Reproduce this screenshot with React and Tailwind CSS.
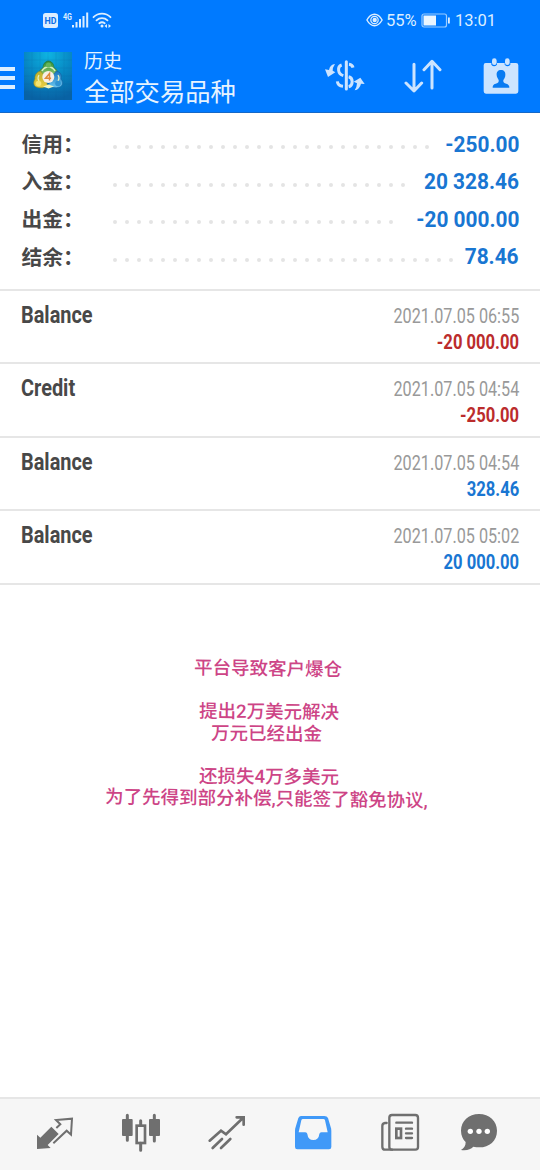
// App.jsx

import React from 'react';

const summary = [
  { label: '信用：', dots: 27, value: '-250.00' },
  { label: '入金：', dots: 25, value: '20 328.46' },
  { label: '出金：', dots: 24, value: '-20 000.00' },
  { label: '结余：', dots: 29, value: '78.46' },
];

const operations = [
  { type: 'Balance', date: '2021.07.05 06:55', amount: '-20 000.00' },
  { type: 'Credit', date: '2021.07.05 04:54', amount: '-250.00' },
  { type: 'Balance', date: '2021.07.05 04:54', amount: '328.46' },
  { type: 'Balance', date: '2021.07.05 05:02', amount: '20 000.00' },
];

const StatusBar = () => (
  <div className="flex h-10 items-center justify-between pl-[43px] pr-11">
    <div className="flex items-center">
      <svg width="70" height="20" viewBox="0 0 70 20" fill="none">
        <rect x="0" y="3" width="15" height="15" rx="2.5" fill="#dceeff" />
        <text x="7.5" y="14" textAnchor="middle" fontFamily="Roboto, sans-serif" fontSize="9.5" fontWeight="700" fill="#0a6ee8" textLength="12" lengthAdjust="spacingAndGlyphs">HD</text>
        <text x="20" y="9.5" fontFamily="Roboto, sans-serif" fontSize="9" fontWeight="700" fill="#dceeff" textLength="9" lengthAdjust="spacingAndGlyphs">4G</text>
        <path d="M30 15v2.5M33.5 12v5.5M37 9v8.5M40.5 6v11.5M44.2 2.5v15" stroke="#dceeff" strokeWidth="2" />
        <path d="M50.5 7.2a12 12 0 0 1 17 0M53.5 10.3a8 8 0 0 1 11 0M56.3 13.3a4.5 4.5 0 0 1 5.4 0" stroke="#dceeff" strokeWidth="1.8" strokeLinecap="round" />
        <circle cx="59" cy="16" r="1.5" fill="#dceeff" />
        <path d="M61.5 16l2.500-2v4zM68 16l-2.500-2v4z" fill="#dceeff" />
      </svg>
    </div>
    <div className="flex items-center text-[#dceeff]">
      <svg width="17" height="14" viewBox="0 0 17 14" fill="none" className="mr-[3px]">
        <path d="M.9 7C3 3.2 5.5 1.3 8.5 1.3S14 3.2 16.1 7C14 10.8 11.5 12.7 8.5 12.7S3 10.8.9 7z" stroke="#dceeff" strokeWidth="1.4" />
        <circle cx="8.5" cy="7" r="3.7" stroke="#dceeff" strokeWidth="1.2" />
        <circle cx="8.7" cy="7" r="2.2" fill="#dceeff" />
      </svg>
      <span className="mt-0.5 w-[35px] whitespace-nowrap text-[16.5px]">55%</span>
      <svg width="30" height="15" viewBox="0 0 30 15" fill="none" className="mr-1">
        <rect x="1" y="1" width="24.5" height="13" rx="2" stroke="#9accff" strokeWidth="1.2" />
        <rect x="2.5" y="2.5" width="12.5" height="10" fill="#eaf5ff" />
        <rect x="27" y="4.5" width="1.8" height="6" fill="#dceeff" />
      </svg>
      <span className="mt-0.5 w-[41px] whitespace-nowrap text-[16.5px]">13:01</span>
    </div>
  </div>
);

const AppLogo = () => (
  <svg width="48" height="48" viewBox="0 0 48 48">
    <defs>
      <radialGradient id="logoBg" cx="50%" cy="5%" r="95%">
        <stop offset="0" stopColor="#0eb4e2" />
        <stop offset="0.5" stopColor="#0789c4" />
        <stop offset="1" stopColor="#0862a4" />
      </radialGradient>
      <linearGradient id="green" x1="0" y1="0" x2="0" y2="1">
        <stop offset="0" stopColor="#2f8c35" />
        <stop offset="1" stopColor="#a3d67c" />
      </linearGradient>
      <linearGradient id="gold" x1="0" y1="0" x2="0" y2="1">
        <stop offset="0" stopColor="#b9b02d" />
        <stop offset="1" stopColor="#eccf45" />
      </linearGradient>
      <linearGradient id="sky" x1="0" y1="0" x2="0" y2="1">
        <stop offset="0" stopColor="#1873bd" />
        <stop offset="1" stopColor="#6ac6ef" />
      </linearGradient>
    </defs>
    <rect width="48" height="48" fill="url(#logoBg)" />
    <path d="M8 0v48M16 0v48M24 0v48M32 0v48M40 0v48M0 8h48M0 16h48M0 24h48M0 32h48M0 40h48" stroke="#0a5e9a" strokeWidth=".4" opacity=".35" />
    <path d="M16 23c-1-3 0-6 3-7 0-4 2.5-7 5.5-7s5.500 3 5.500 7c3 1 4 4 3 7l-3 4H19z" fill="url(#green)" stroke="#23702f" strokeWidth=".6" />
    <path d="M16.5 19c-4 1-6 4-5.5 8-2 3-1.500 7 1.500 8 4 1.500 8 1 11-1.500L21 24z" fill="url(#gold)" stroke="#8a8a25" strokeWidth=".6" />
    <path d="M32.5 19c4 1 5.500 4 4.500 8 2.500 3 2 7-1.500 8-4 1.500-8 .5-11-2L28 24z" fill="url(#sky)" stroke="#155f9f" strokeWidth=".6" />
    <path d="M18 19q2-4 6.500-4t6.500 4" stroke="#d5efbd" strokeWidth="1.6" fill="none" />
    <path d="M15 23q-2 3 0 6M34 23q2 3 0 6" stroke="#e6efc0" strokeWidth="1.2" fill="none" />
    <circle cx="24.5" cy="13" r="2.6" fill="#63b55a" />
    <circle cx="14.5" cy="31.5" r="2.8" fill="#f6e470" />
    <circle cx="34" cy="31.5" r="2.8" fill="#3093d2" />
    <path d="M19 34.500l5.500-2 5.500 2-5.500 2z" fill="#eef4c0" />
    <circle cx="24.3" cy="25" r="6" fill="#f7efe6" />
    <path d="M25.5 28.500v-7l-4 4.800h5.600" stroke="#e08a3c" strokeWidth="1.500" fill="none" />
  </svg>
);

const CurrencyIcon = () => (
  <svg width="42" height="34" viewBox="162 177 126 102" fill="none" stroke="#cce4ff">
    <path d="M229 185v82" strokeWidth="9" strokeLinecap="round" />
    <path d="M215 195c-14 5-12 27 5 32M237 193c8 1 11 5 12 10M236 230c14 3 14 27 0 30M219 259c-10-1-16-6-17-15" strokeWidth="9" />
    <path d="M195 192q-15 2-18 18l-12-2 9 23 22-14-8-5q-1-8 7-20z" fill="#cce4ff" stroke="none" />
    <path d="M254 271q15-3 19-20l11 1-13-19-20 12 10 5q0 10-7 21z" fill="#cce4ff" stroke="none" />
  </svg>
);

const SortIcon = () => (
  <svg width="38" height="34" viewBox="402 177 114 102" fill="none" stroke="#cce4ff" strokeWidth="9" strokeLinecap="round" strokeLinejoin="round">
    <path d="M432 193v79M408 249l24 24 23-24M486 264v-79M462 209l24-25 24 25" />
  </svg>
);

const CalendarIcon = () => (
  <svg width="36" height="38" viewBox="639 171 108 114">
    <path d="M647 189h17v5q8 10 17 0v-5h23v5q9 10 17 0v-5h17q7 0 7 7v78q0 7-7 7h-90q-7 0-7-7v-78q0-7 6-7z" fill="#cce4ff" />
    <rect x="666" y="175" width="14" height="20" rx="7" fill="#cce4ff" />
    <rect x="705" y="175" width="14" height="20" rx="7" fill="#cce4ff" />
    <path d="M693 210c-9 0-14 6-13 15 0 7 4 11 6 15 1 8-3 9-9 11-7 2-9 5-9 12h50c0-7-3-10-9-12-7-2-10-3-9-11 3-4 6-8 6-15 1-9-4-15-13-15z" fill="#087bf2" />
  </svg>
);

const Header = () => (
  <header className="h-[112.5px] border-b border-[#1468c8] bg-[#007aff]">
    <StatusBar />
    <div className="flex h-[71px] items-start">
      <div className="mt-[27px] flex w-[15px] flex-col gap-[5px]">
        <span className="h-1 bg-[#dceeff]" />
        <span className="h-1 bg-[#dceeff]" />
        <span className="h-1 bg-[#dceeff]" />
      </div>
      <div className="ml-[9px] mt-3">
        <AppLogo />
      </div>
      <div className="ml-3 mt-1.5 flex-1 whitespace-nowrap font-['Noto_Sans_CJK_SC',sans-serif] text-[#e6f3ff]">
        <div className="text-[19px] leading-[27px]">历史</div>
        <div className="text-[25.3px] leading-[34px]">全部交易品种</div>
      </div>
      <div className="mr-[21px] mt-[17px] flex items-center">
        <CurrencyIcon />
        <span className="ml-[38px]"><SortIcon /></span>
        <span className="ml-[41px]"><CalendarIcon /></span>
      </div>
    </div>
  </header>
);

const Summary = () => (
  <section className="h-[176px] pl-[21.5px] pr-[21px] pt-3">
    {summary.map((row) => (
      <div key={row.label} className="flex h-[37.6px] items-center">
        <span className="w-[91.5px] whitespace-nowrap font-['Noto_Sans_CJK_SC',sans-serif] text-[20.8px] font-bold leading-none text-[#484848]">{row.label}</span>
        <span className="mt-2 flex gap-2">
          {Array.from({ length: row.dots }, (_, i) => (
            <i key={i} className="size-1 rounded-full bg-[#e4e4e4]" />
          ))}
        </span>
        <span className="ml-auto mt-0.5 origin-right scale-x-[.97] whitespace-nowrap text-[21.5px] font-bold leading-none text-[#1976d2]">{row.value}</span>
      </div>
    ))}
  </section>
);

const Operation = ({ type, date, amount }) => {
  const negative = amount.startsWith('-');
  return (
    <div className="flex h-[73.6px] justify-between border-t-2 border-[#e6e6e6] px-[21px]">
      <span className="mt-2.5 origin-left scale-x-[.83] text-[24px] font-bold leading-[29px] text-[#484848]">{type}</span>
      <div className="mt-3 flex flex-col items-end whitespace-nowrap">
        <span className="origin-right scale-x-[.81] text-[20px] leading-[26px] text-[#999999]">{date}</span>
        <span className={`origin-right scale-x-[.83] text-[20px] font-bold leading-[26px] ${negative ? 'text-[#bb2c2c]' : 'text-[#1976d2]'}`}>{amount}</span>
      </div>
    </div>
  );
};

const Note = () => (
  <section className="flex flex-1 flex-col pt-[74px] font-[Roboto,'Noto_Sans_CJK_SC',sans-serif] text-[18.5px] font-medium leading-[21.6px] text-[#cd4486]">
    <p className="ml-[194px] w-fit rotate-[.7deg] whitespace-nowrap">平台导致客户爆仓</p>
    <p className="ml-[199px] mt-[22px] w-fit rotate-[.5deg] whitespace-nowrap">提出2万美元解决</p>
    <p className="ml-[211px] w-fit rotate-[.5deg] whitespace-nowrap">万元已经出金</p>
    <p className="ml-[199px] mt-[21px] w-fit rotate-[.5deg] whitespace-nowrap">还损失4万多美元</p>
    <p className="ml-[105px] mt-px w-fit rotate-[.7deg] whitespace-nowrap">为了先得到部分补偿,只能签了豁免协议,</p>
  </section>
);

const TabBar = () => (
  <nav className="h-[73px] border-t-2 border-[#e6e6e6] bg-[#f6f6f6]">
    <svg width="540" height="71" viewBox="0 27 1620 213" fill="none">
      {/* quotes */}
      <path d="M111 134l10 9 33-33 22 22-33 33 9 9-41 3z" fill="#6f6f6f" />
      <path d="M169 114l12-11-13-13 48-4-3 48-13-12-40 38" stroke="#6f6f6f" strokeWidth="6" />
      {/* chart */}
      <path d="M382 76v75M463 76v77M422 92v14M422 160v21" stroke="#6f6f6f" strokeWidth="9" strokeLinecap="round" />
      <rect x="366" y="87" width="32" height="51" rx="3" fill="#6f6f6f" />
      <rect x="447" y="87" width="33" height="51" rx="3" fill="#6f6f6f" />
      <rect x="410" y="107" width="25" height="52" stroke="#6f6f6f" strokeWidth="8" />
      {/* trade */}
      <path d="M629 152l34-30 15 11 50-48M710 82h21v22M638 174l28-27M663 174l28-27" stroke="#6f6f6f" strokeWidth="8" strokeLinecap="round" />
      {/* history */}
      <path d="M903 78h70q8 0 11 6l8 27q2 5 2 12v48q0 7-7 7H892q-7 0-7-7v-48q0-7 2-12l8-27q3-6 8-6zM909 87q-4 0-5 4l-8 36h20q5 0 6 5 2 18 18 18t18-18q1-5 6-5h19l-8-36q-1-4-5-4z" fill="#4099f8" fillRule="evenodd" />
      {/* news */}
      <rect x="1168" y="75" width="86" height="104" rx="8" stroke="#6f6f6f" strokeWidth="7" />
      <path d="M1160 99h-5q-8 1-8 9v62q0 9 9 9h20M1189 98h47M1218 116h18M1218 130h18M1218 144h18" stroke="#6f6f6f" strokeWidth="7" strokeLinecap="round" />
      <rect x="1189" y="116" width="14" height="28" stroke="#6f6f6f" strokeWidth="8" />
      {/* messages */}
      <path d="M1437 72c-31 0-54 22-54 50 0 15 6 26 14 34 0 12-5 19-14 24 17 3 29-2 37-10 39 9 71-12 71-48 0-28-23-50-54-50z" fill="#6f6f6f" />
      <circle cx="1411" cy="124" r="8" fill="#fff" />
      <circle cx="1437" cy="124" r="8" fill="#fff" />
      <circle cx="1462" cy="124" r="8" fill="#fff" />
    </svg>
  </nav>
);

const App = () => (
  <div className="flex h-[1170px] w-[540px] flex-col overflow-hidden bg-white font-[Roboto,'Noto_Sans_CJK_SC',sans-serif]">
    <Header />
    <Summary />
    <main className="border-b-2 border-[#e6e6e6]">
      {operations.map((op, i) => (
        <Operation key={i} {...op} />
      ))}
    </main>
    <Note />
    <TabBar />
  </div>
);

export default App;
